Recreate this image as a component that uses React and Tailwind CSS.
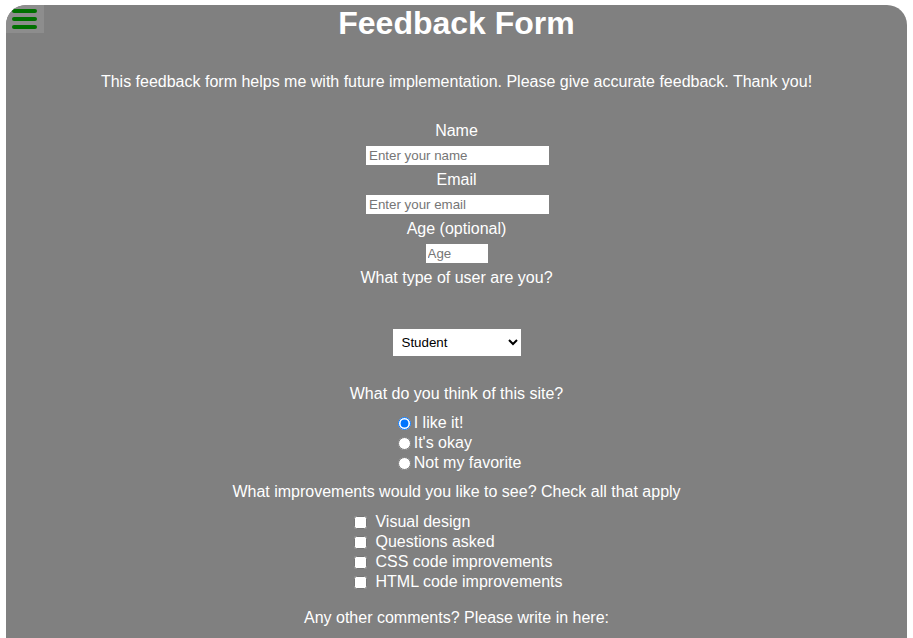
import { useState } from 'react';

const options = ['Student', 'Teacher', 'Developer', 'Other'];

const radios = [
  { id: 'like', label: 'I like it!' },
  { id: 'okay', label: "It's okay" },
  { id: 'not', label: 'Not my favorite' },
];

const checks = [
  'Visual design',
  'Questions asked',
  'CSS code improvements',
  'HTML code improvements',
];

function Hamburger() {
  return (
    <div className="absolute top-0 left-0 w-[38px] h-[28px] bg-[#8d8d8d] flex flex-col items-center justify-center gap-[4px] pr-[1px]">
      <span className="block w-[25px] h-[4px] rounded-full bg-[#007000]" />
      <span className="block w-[25px] h-[4px] rounded-full bg-[#007000]" />
      <span className="block w-[25px] h-[4px] rounded-full bg-[#007000]" />
    </div>
  );
}

export default function App() {
  const [opinion, setOpinion] = useState('like');
  const [type, setType] = useState('Student');

  return (
    <div className="min-h-screen bg-white pt-[5px] px-[6px] font-['Liberation_Sans',Arial,sans-serif]">
      <div className="relative overflow-hidden rounded-t-[20px] bg-[#808080] text-white min-h-[700px] flex flex-col items-center">
        <Hamburger />

        <h1 className="m-0 text-[32px] leading-[37px] font-bold">Feedback Form</h1>

        <p className="mt-[31px] text-[16px] leading-[18px]">
          This feedback form helps me with future implementation. Please give accurate feedback. Thank you!
        </p>

        <label className="mt-[31px] text-[16px] leading-[18px]">Name</label>
        <input
          type="text"
          placeholder="Enter your name"
          className="mt-[6px] ml-[2px] w-[183px] h-[19px] bg-white text-black text-[13.33px] px-[3px] border-0 outline-none placeholder:text-[#767676]"
        />

        <label className="mt-[6px] text-[16px] leading-[18px]">Email</label>
        <input
          type="email"
          placeholder="Enter your email"
          className="mt-[6px] ml-[2px] w-[183px] h-[19px] bg-white text-black text-[13.33px] px-[3px] border-0 outline-none placeholder:text-[#767676]"
        />

        <label className="mt-[6px] text-[16px] leading-[18px]">Age (optional)</label>
        <input
          type="number"
          placeholder="Age"
          className="mt-[6px] w-[62px] h-[19px] bg-white text-black text-[13.33px] px-[2px] border-0 outline-none placeholder:text-[#767676]"
        />

        <label className="mt-[6px] text-[16px] leading-[18px]">What type of user are you?</label>
        <select
          value={type}
          onChange={(e) => setType(e.target.value)}
          className="mt-[42px] w-[128px] h-[27px] bg-white text-black text-[13.33px] pl-[5px] border-0"
        >
          {options.map((o) => (
            <option key={o}>{o}</option>
          ))}
        </select>

        <p className="mt-[29px] text-[16px] leading-[18px]">What do you think of this site?</p>
        <div className="mt-[10px] flex flex-col items-start pl-[6px]">
          {radios.map((r) => (
            <label key={r.id} className="flex items-center h-[20px] text-[16px]">
              <input
                type="radio"
                name="opinion"
                checked={opinion === r.id}
                onChange={() => setOpinion(r.id)}
                className="m-0 w-[13px] h-[13px] mr-[3px]"
              />
              {r.label}
            </label>
          ))}
        </div>

        <p className="mt-[10px] text-[16px] leading-[18px]">What improvements would you like to see? Check all that apply</p>
        <div className="mt-[11px] flex flex-col items-start pl-[4px]">
          {checks.map((c) => (
            <label key={c} className="flex items-center h-[20px] text-[16px]">
              <input type="checkbox" className="m-0 w-[13px] h-[13px] mr-[8px]" />
              {c}
            </label>
          ))}
        </div>

        <p className="mt-[17px] text-[16px] leading-[18px]">Any other comments? Please write in here:</p>
      </div>
    </div>
  );
}
